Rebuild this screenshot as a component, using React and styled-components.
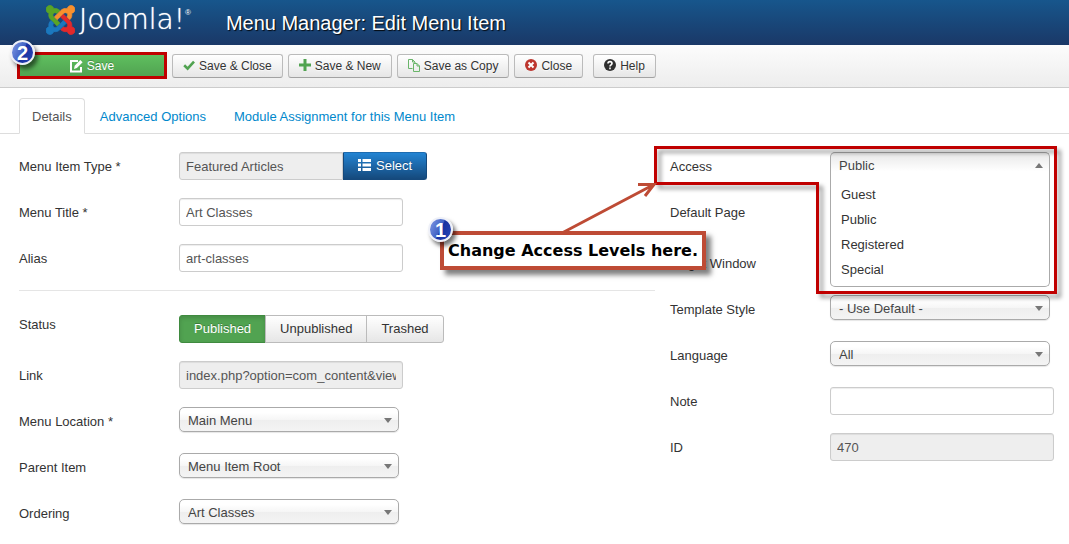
import React from "react";
import styled, { createGlobalStyle, css } from "styled-components";

const GlobalStyle = createGlobalStyle`
  *, *::before, *::after { box-sizing: border-box; }
  body {
    margin: 0;
    background: #fff;
    color: #333;
    font: 13px/18px "Liberation Sans", Arial, sans-serif;
  }
  button, input, select { font: inherit; margin: 0; }
`;

const Header = styled.header`
  display: flex;
  align-items: center;
  gap: 35px;
  height: 45px;
  padding: 0 46px;
  background: linear-gradient(#17568c, #1a3867);
  color: #fff;
`;

const Brand = styled.a`
  display: flex;
  align-items: center;
  gap: 4px;
  margin-bottom: 6px;
  color: #fff;
  text-decoration: none;
`;

const Wordmark = styled.span`
  font: 200 28px/30px "DejaVu Sans", sans-serif;
  text-shadow: 0 0 1px #fff;
`;

const Registered = styled.sup`
  align-self: flex-start;
  margin-left: -4px;
  padding-top: 4px;
  font-size: 8px;
  line-height: 8px;
`;

const PageTitle = styled.h1`
  margin: 0;
  font-size: 20px;
  font-weight: 400;
  line-height: 24px;
  text-shadow: 1px 1px 1px rgba(0, 0, 0, 0.9);
`;

const Toolbar = styled.div`
  display: flex;
  align-items: center;
  gap: 5px;
  padding: 7px 17px 8px;
  border-bottom: 1px solid #ccc;
  background: linear-gradient(#fcfcfc, #ededed);
`;

const ToolButton = styled.button`
  display: flex;
  align-items: center;
  gap: 4px;
  height: 24px;
  margin-top: 1px;
  margin-left: ${(p) => (p.$apart ? 5 : 0)}px;
  padding: 0 10px;
  border: 1px solid #bbb;
  border-bottom-color: #a2a2a2;
  border-radius: 3px;
  background: linear-gradient(#fff, #e6e6e6);
  color: #333;
  font-size: 12px;
  line-height: 18px;
  text-shadow: 0 1px 1px rgba(255, 255, 255, 0.75);
`;

const SaveFrame = styled.div`
  position: relative;
  border: 3px solid #c00000;
`;

const SaveButton = styled.button`
  display: flex;
  align-items: center;
  justify-content: center;
  gap: 4px;
  width: 144px;
  height: 21px;
  padding: 0;
  border: 0;
  background: linear-gradient(#5fbf5f, #51a351);
  color: #fff;
  font-size: 12px;
  text-shadow: 0 -1px 0 rgba(0, 0, 0, 0.25);
`;

const Badge = styled.span`
  position: absolute;
  left: ${(p) => (p.$outer ? -16 : -10)}px;
  top: ${(p) => (p.$outer ? -18 : -15)}px;
  display: flex;
  align-items: center;
  justify-content: center;
  width: 25px;
  height: 25px;
  border: 2px solid #eef0f8;
  border-radius: 50%;
  background: linear-gradient(115deg, #6b87da 0 15%, #3f61c4 48%, #1830a0 52%, #2747b8);
  box-shadow: 3px 4px 4px rgba(0, 0, 0, 0.55);
  color: #fff;
  font: 700 20px/20px "Liberation Sans", Arial, sans-serif;
`;

const Tabs = styled.nav`
  display: flex;
  gap: 2px;
  margin-top: 10px;
  padding-left: 19px;
  border-bottom: 1px solid #ddd;
`;

const Tab = styled.a`
  margin-bottom: -1px;
  padding: 9px 12px 7px;
  border: 1px solid transparent;
  border-radius: 4px 4px 0 0;
  color: #08c;
  text-decoration: none;
  ${(p) =>
    p.$active &&
    css`
      border-color: #ddd #ddd #fff;
      background: #fff;
      color: #555;
    `}
`;

const Form = styled.form`
  display: grid;
  grid-template-columns: minmax(0, 636fr) minmax(384px, 384fr);
  gap: 15px;
  padding: 18px 15px 0 19px;
`;

const Column = styled.div`
  position: relative;
`;

const Row = styled.div`
  display: flex;
  align-items: flex-start;
  min-height: 28px;
  margin-bottom: ${(p) => (p.$loose ? 23 : 18)}px;
`;

const Label = styled.label`
  flex: 0 0 160px;
  padding-top: ${(p) => (p.$flush ? 1 : 6)}px;
`;

const TextInput = styled.input`
  width: ${(p) => (p.$joined ? 164 : 224)}px;
  height: 28px;
  padding: 4px 6px;
  border: 1px solid #ccc;
  border-radius: ${(p) => (p.$joined ? "3px 0 0 3px" : "3px")};
  background: #fff;
  box-shadow: inset 0 1px 1px rgba(0, 0, 0, 0.075);
  color: #555;
  &:read-only { background: #eee; }
`;

const SelectButton = styled.button`
  display: flex;
  align-items: center;
  gap: 5px;
  height: 28px;
  padding: 0 14px;
  border: 1px solid #15497c;
  border-top-color: #1d6cb0;
  border-radius: 0 3px 3px 0;
  background: linear-gradient(#2384d3, #15497c);
  color: #fff;
  text-shadow: 0 -1px 0 rgba(0, 0, 0, 0.25);
`;

const Divider = styled.hr`
  height: 1px;
  margin: 0 0 24px;
  border: 0;
  background: #e5e5e5;
`;

const Group = styled.div`
  display: flex;
`;

const GroupButton = styled.button`
  height: 28px;
  margin-left: -1px;
  padding: 0 14px;
  border: 1px solid #bbb;
  background: linear-gradient(#fff, #e6e6e6);
  color: #333;
  &:first-child { margin-left: 0; border-radius: 3px 0 0 3px; }
  &:last-child { border-radius: 0 3px 3px 0; }
  ${(p) =>
    p.$on &&
    css`
      border-color: #3f8a3f;
      background: #51a351;
      box-shadow: inset 0 2px 4px rgba(0, 0, 0, 0.15);
      color: #fff;
      text-shadow: 0 -1px 0 rgba(0, 0, 0, 0.25);
    `}
`;

const SelectBox = styled.div`
  position: relative;
  width: 220px;
  height: 25px;
`;

const NativeSelect = styled.select`
  width: 100%;
  height: 25px;
  padding: 2px 26px 0 8px;
  appearance: none;
  border: 1px solid #aaa;
  border-radius: 5px;
  background: linear-gradient(#fff 20%, #f6f6f6 50%, #eee 52%, #f4f4f4 100%);
  box-shadow: 0 1px 1px rgba(0, 0, 0, 0.1);
  color: #444;
  ${(p) =>
    p.$open &&
    css`
      border-bottom-color: #fff;
      border-radius: 5px 5px 0 0;
      background: linear-gradient(#eee 20%, #fff 80%);
      box-shadow: none;
    `}
`;

const Caret = styled.span`
  position: absolute;
  right: 7px;
  top: 11px;
  border: 4px solid transparent;
  border-width: ${(p) => (p.$up ? "0 4px 5px" : "5px 4px 0")};
  border-bottom-color: ${(p) => (p.$up ? "#777" : "transparent")};
  border-top-color: ${(p) => (p.$up ? "transparent" : "#777")};
  pointer-events: none;
`;

const Options = styled.ul`
  position: absolute;
  left: 0;
  top: 24px;
  z-index: 1;
  width: 100%;
  margin: 0;
  padding: 6px 10px 4px;
  border: 1px solid #aaa;
  border-top: 0;
  border-radius: 0 0 5px 5px;
  background: #fff;
  list-style: none;
  line-height: 25px;
`;

const Outline = styled.svg`
  position: absolute;
  left: -20px;
  top: -10px;
  z-index: 2;
  overflow: visible;
  pointer-events: none;
  filter: drop-shadow(4px 4px 2px rgba(0, 0, 0, 0.4));
`;

const Arrow = styled.svg`
  position: absolute;
  left: -120px;
  top: 26px;
  z-index: 3;
  overflow: visible;
  pointer-events: none;
`;

const Callout = styled.div`
  position: absolute;
  left: -230px;
  top: 79px;
  z-index: 3;
  padding: 6px 4px;
  border: 4px solid #be4b35;
  background: #fff;
  box-shadow: 5px 5px 5px rgba(0, 0, 0, 0.5);
  color: #000;
  font: 700 16px/19px "DejaVu Sans", sans-serif;
  white-space: nowrap;
`;

const LOGO_PARTS = [
  ["#5aa426", "M.6 92.1C.6 58.8 27.4 32 60.4 32c30 0 54.5 21.9 59.2 50.2 32.6-7.6 67.1.6 96.5 30l-44.3 44.3c-20.5-20.5-42.6-16.3-55.4-3.5-14.3 14.3-14.3 37.9 0 52.2l99.5 99.5-44 44.3c-87.7-87.2-49.7-49.7-99.8-99.7-26.8-26.5-35-64.8-24.8-98.9C20.4 144.6.6 120.7.6 92.1z"],
  ["#f8902d", "M130.1 208.5l44.3 44.3c10-10 89.7-89.7 99.7-99.8 14.3-14.3 37.6-14.3 51.9 0 12.8 12.8 17 35-3.5 55.4l44 44.3c31.2-31.2 38.5-67.6 28.9-101.2 29.2-4.1 51.9-29.2 51.9-59.5 0-33.2-26.8-60.1-59.8-60.1-30.3 0-55.4 22.5-59.5 51.6-33.8-9.9-71.7-1.5-98.3 25.1-18.3 19.1-71.1 71.5-99.6 99.9z"],
  ["#e2292b", "M396.4 360.7c8.2-32.7-.9-68.5-26.3-93.9-11.8-12.2 5 4.7-99.5-99.7l-44.3 44.3 99.7 99.7c14.3 14.3 14.3 37.6 0 51.9-12.8 12.8-35 17-55.4-3.5l-44 44.3c27.6 30.2 68 38.8 102.7 28 5.5 27.4 29.7 48.1 58.9 48.1 33 0 59.8-26.8 59.8-60.1 0-30.2-22.5-55-51.6-59.1z"],
  ["#1b78be", "M312.1 307.6l-44-44.3c-87 86.4-50.4 50.4-99.7 99.8-14.3 14.3-37.6 14.3-51.9 0-13.1-13.4-16.9-35.3 3.2-55.4l-44-44.3c-30.2 30.2-38 65.2-29.5 98.3-26.7 6-46.2 29.9-46.2 58.2C0 453.2 26.8 480 59.8 480c28.6 0 52.5-19.8 58.6-46.7 32.7 8.2 68.5-.6 94.2-26 32.1-32 12.2-12.4 99.5-99.7z"],
];

const JoomlaMark = () => (
  <svg width="29" height="30" viewBox="0 32 448 448" aria-hidden="true">
    {LOGO_PARTS.map(([fill, d]) => (
      <path key={fill} fill={fill} stroke={fill} strokeWidth="12" d={d} />
    ))}
  </svg>
);

const Icon = ({ width = 13, children }) => (
  <svg width={width} height="14" viewBox={`0 0 ${width} 14`} fill="none" aria-hidden="true">
    {children}
  </svg>
);

const EditIcon = () => (
  <Icon>
    <path d="M8 2H1v10.500h10V8" stroke="#fff" strokeWidth="2" />
    <path d="M4 10l.7-3.200L10.300 1l2.300 2.200-5.700 5.900z" fill="#fff" />
  </Icon>
);
const CheckIcon = () => (
  <Icon width={12}>
    <path d="M1.200 6.300l3.400 3.300L11 2.700" stroke="#51a351" strokeWidth="2.600" />
  </Icon>
);
const PlusIcon = () => (
  <Icon width={12}>
    <path d="M6 0v12M0 6h12" stroke="#51a351" strokeWidth="3" />
  </Icon>
);
const CopyIcon = () => (
  <Icon width={12}>
    <path d="M4.500 9.500h-4v-9h4l2.500 2.500v1M4.500 .5v2.500H7M5.500 4.500h3.500l2.500 2.500v5.500h-6zM9 4.500V7h2.500" stroke="#6ab56a" />
  </Icon>
);
const CloseIcon = () => (
  <Icon width={12}>
    <circle cx="6" cy="6" r="6" fill="#bd362f" />
    <path d="M3.500 3.500l5 5M8.500 3.500l-5 5" stroke="#fff" strokeWidth="2" />
  </Icon>
);
const HelpIcon = () => (
  <Icon width={12}>
    <circle cx="6" cy="6" r="6" fill="#2f2f2f" />
    <path d="M4 4.500c0-2.500 4-2.500 4 0 0 1.300-2 1.300-2 3M6 8.500v1.700" stroke="#fff" strokeWidth="1.600" />
  </Icon>
);
const ListIcon = () => (
  <Icon width={13}>
    <path d="M0 1.500h3M4.500 1.500H13M0 6h3M4.500 6H13M0 10.500h3M4.500 10.500H13" stroke="#fff" strokeWidth="3" />
  </Icon>
);

function Field({ id, label, flush, loose, children }) {
  return (
    <Row $loose={loose}>
      <Label as={id ? "label" : "span"} htmlFor={id} $flush={flush}>{label}</Label>
      {children}
    </Row>
  );
}

function Dropdown({ id, value, options }) {
  return (
    <SelectBox>
      <NativeSelect id={id} defaultValue={value} $open={!!options}>
        {(options || [value]).map((o) => (
          <option key={o}>{o}</option>
        ))}
      </NativeSelect>
      <Caret $up={!!options} />
      {options && (
        <Options>
          {options.map((o) => (
            <li key={o}>{o}</li>
          ))}
        </Options>
      )}
    </SelectBox>
  );
}

export default function App() {
  return (
    <>
      <GlobalStyle />
      <Header>
        <Brand href="#" aria-label="Joomla!">
          <JoomlaMark />
          <Wordmark>Joomla!</Wordmark>
          <Registered>®</Registered>
        </Brand>
        <PageTitle>Menu Manager: Edit Menu Item</PageTitle>
      </Header>

      <Toolbar>
        <SaveFrame>
          <SaveButton type="button"><EditIcon />Save</SaveButton>
          <Badge>2</Badge>
        </SaveFrame>
        <ToolButton type="button"><CheckIcon />Save &amp; Close</ToolButton>
        <ToolButton type="button"><PlusIcon />Save &amp; New</ToolButton>
        <ToolButton type="button"><CopyIcon />Save as Copy</ToolButton>
        <ToolButton type="button"><CloseIcon />Close</ToolButton>
        <ToolButton type="button" $apart><HelpIcon />Help</ToolButton>
      </Toolbar>

      <Tabs>
        <Tab href="#details" $active>Details</Tab>
        <Tab href="#options">Advanced Options</Tab>
        <Tab href="#modules">Module Assignment for this Menu Item</Tab>
      </Tabs>

      <Form>
        <Column>
          <Field id="type" label="Menu Item Type *">
            <TextInput id="type" $joined readOnly defaultValue="Featured Articles" />
            <SelectButton type="button"><ListIcon />Select</SelectButton>
          </Field>
          <Field id="title" label="Menu Title *">
            <TextInput id="title" defaultValue="Art Classes" />
          </Field>
          <Field id="alias" label="Alias">
            <TextInput id="alias" defaultValue="art-classes" />
          </Field>
          <Divider />
          <Field label="Status" flush>
            <Group role="group" aria-label="Status">
              <GroupButton type="button" $on>Published</GroupButton>
              <GroupButton type="button">Unpublished</GroupButton>
              <GroupButton type="button">Trashed</GroupButton>
            </Group>
          </Field>
          <Field id="link" label="Link">
            <TextInput id="link" readOnly defaultValue="index.php?option=com_content&view=featured" />
          </Field>
          <Field id="location" label="Menu Location *">
            <Dropdown id="location" value="Main Menu" />
          </Field>
          <Field id="parent" label="Parent Item">
            <Dropdown id="parent" value="Menu Item Root" />
          </Field>
          <Field id="ordering" label="Ordering">
            <Dropdown id="ordering" value="Art Classes" />
          </Field>
        </Column>

        <Column>
          <Field id="access" label="Access">
            <Dropdown id="access" value="Public" options={["Guest", "Public", "Registered", "Special"]} />
          </Field>
          <Field label="Default Page" loose />
          <Field label="Target Window" />
          <Field id="template" label="Template Style">
            <Dropdown id="template" value="- Use Default -" />
          </Field>
          <Field id="language" label="Language">
            <Dropdown id="language" value="All" />
          </Field>
          <Field id="note" label="Note">
            <TextInput id="note" />
          </Field>
          <Field id="item-id" label="ID">
            <TextInput id="item-id" readOnly defaultValue="470" />
          </Field>

          <Outline width="410" height="160" aria-hidden="true">
            <path
              d="M5.500 5.500H405.500V150.500H167.500V41.500H5.500z"
              fill="none"
              stroke="#c00000"
              strokeWidth="3"
            />
          </Outline>
          <Arrow width="110" height="60" aria-hidden="true">
            <path
              d="M12 55L103 7M88 6.500L104 6.500L95 18"
              fill="none"
              stroke="#be4b35"
              strokeWidth="3"
            />
          </Arrow>
          <Callout>
            <Badge $outer>1</Badge>
            Change Access Levels here.
          </Callout>
        </Column>
      </Form>
    </>
  );
}
